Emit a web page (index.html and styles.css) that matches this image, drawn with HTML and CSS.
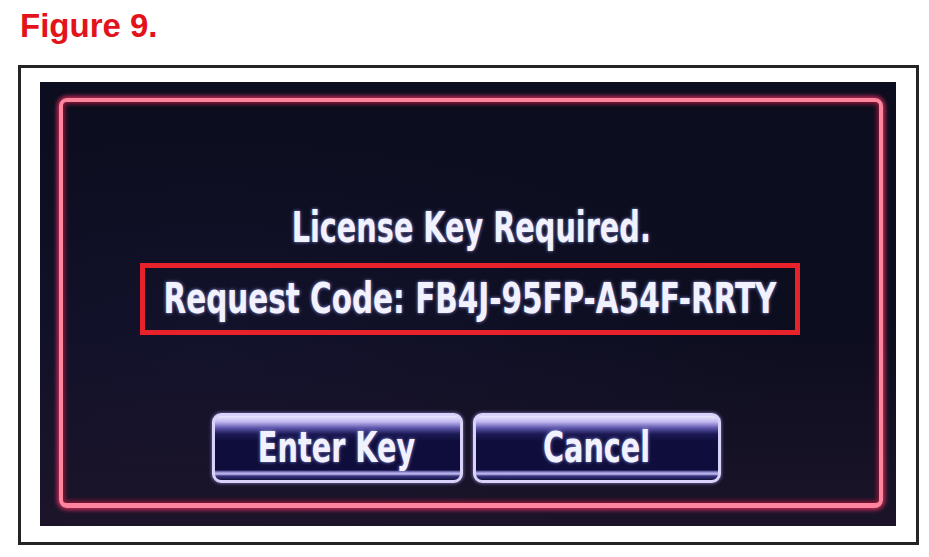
FILE: index.html
```html
<!DOCTYPE html>
<html lang="en">
<head>
    <meta charset="UTF-8">
    <meta name="viewport" content="width=device-width, initial-scale=1.0">
    <title>Figure 9 - License Key Required</title>
    <link rel="stylesheet" href="styles.css">
</head>
<body>
    <h1 class="caption">Figure 9.</h1>
    <div class="frame">
        <div class="screen">
            <div class="panel">
                <div class="title"><span class="squeeze">License Key Required.</span></div>
                <div class="code"><span class="squeeze wide">Request Code: FB4J-95FP-A54F-RRTY</span></div>
                <div class="buttons">
                    <div class="btn btn-enter"><span class="squeeze">Enter Key</span></div>
                    <div class="btn btn-cancel"><span class="squeeze">Cancel</span></div>
                </div>
            </div>
        </div>
    </div>
</body>
</html>
```

FILE: styles.css
```css
body { margin: 0; background: #ffffff; }

.caption {
    margin: 0;
    padding: 9px 0 0 20px;
    font-family: "Liberation Sans", Arial, sans-serif;
    font-weight: bold;
    font-size: 33px;
    line-height: 33px;
    color: #e3131b;
}

.frame {
    box-sizing: border-box;
    width: 901px;
    height: 480px;
    margin: 23px 0 0 18px;
    border: 3px solid #242424;
    padding: 14px 20px 16px 19px;
}

.screen {
    box-sizing: border-box;
    height: 444px;
    padding: 16px 13px 18px 19px;
    background:
        linear-gradient(to bottom, rgba(0, 0, 0, 0) 55%, rgba(40, 26, 50, 0.55) 100%),
        radial-gradient(ellipse at 20% 60%, rgba(30, 28, 70, 0.35), transparent 60%),
        #0c0d1e;
}

.panel {
    box-sizing: border-box;
    height: 100%;
    border: 4px solid #ff859f;
    border-bottom-width: 5px;
    border-radius: 8px;
    box-shadow: 0 0 4px 2px #c42a58, inset 0 0 4px 2px #8e1838;
    display: flex;
    flex-direction: column;
    align-items: center;
    font-family: "DejaVu Sans Condensed", "Liberation Sans Narrow", "DejaVu Sans", sans-serif;
    font-stretch: condensed;
    font-weight: bold;
    font-size: 42px;
    color: #f2f2ff;
    text-shadow: 0 0 4px rgba(170, 170, 255, 0.85);
}

.squeeze {
    display: inline-block;
    transform: scaleX(0.76);
    white-space: nowrap;
}

.squeeze.wide { transform: scaleX(0.78); }

.title {
    margin-top: 105px;
    line-height: 42px;
    height: 42px;
}

.code {
    box-sizing: border-box;
    width: 660px;
    height: 72px;
    margin: 14px 3px 0 0;
    border: 5px solid #e8222b;
    line-height: 62px;
    display: flex;
    justify-content: center;
}

.buttons {
    display: flex;
    gap: 10px;
    margin: 78px 10px 0 0;
}

.btn {
    box-sizing: border-box;
    height: 70px;
    border: 3px solid #d9d3fb;
    border-radius: 9px;
    line-height: 64px;
    display: flex;
    justify-content: center;
    box-shadow: 0 0 3px 1px rgba(140, 130, 200, 0.6);
    background: linear-gradient(to bottom,
        #ece8ff 0,
        #bdb5ee 6px,
        #5d55aa 12px,
        #1c1a55 18px,
        #0e0d3b 40%,
        #0e0d3b calc(100% - 10px),
        #8d85cf calc(100% - 8px),
        #c6bff0 calc(100% - 6px),
        #3a3682 calc(100% - 4px),
        #15133f 100%);
}

.btn-enter { width: 251px; }
.btn-cancel { width: 248px; }
```
